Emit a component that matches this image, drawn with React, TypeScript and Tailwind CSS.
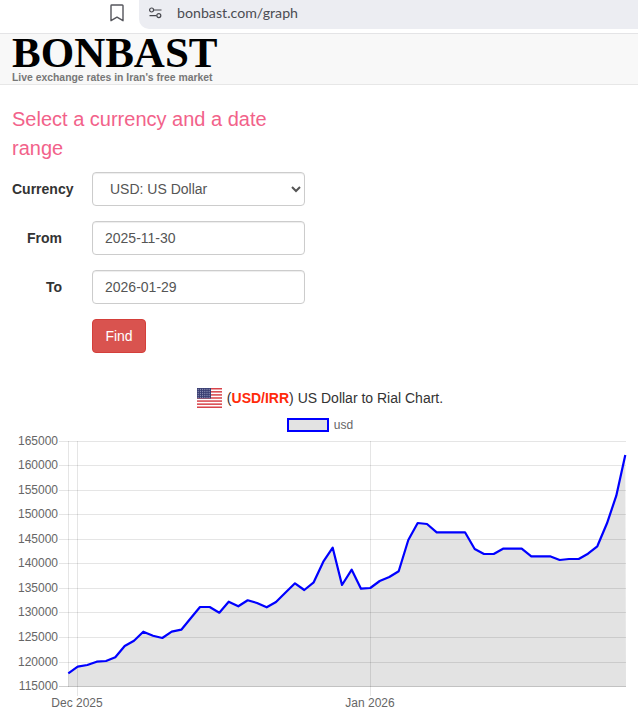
const leftPts = [
  [205, 730], [233, 710], [262, 705], [290, 695], [318, 693], [346, 682], [374, 648], [402, 632], [430, 605],
  [459, 617], [487, 624], [515, 605], [544, 599], [572, 565], [600, 531], [629, 531], [658, 548], [686, 515],
  [715, 529], [743, 511], [771, 519], [800, 532], [828, 516], [856, 488], [885, 460], [913, 480], [941, 457],
]
const rightPts = [
  [16, 395], [44, 353], [72, 465], [101, 419], [129, 476], [157, 474], [185, 453], [214, 441], [242, 424],
  [271, 330], [299, 279], [327, 282], [356, 307], [384, 307], [413, 307], [441, 307], [470, 357], [498, 372],
  [527, 372], [555, 356], [583, 356], [611, 356], [640, 379], [668, 379], [696, 379], [725, 390], [753, 387],
  [782, 387], [810, 371], [838, 349], [867, 280], [895, 197], [922, 75],
]

// measured from the reference, in page pixels
const points = [
  ...leftPts.map(([x, y]) => [x / 3, 430 + y / 3]),
  ...rightPts.map(([x, y]) => [318 + x / 3, 430 + y / 3]),
]
const line = points.map(([x, y]) => `${x.toFixed(1)},${y.toFixed(1)}`).join(' ')
const area = `68.3,686.5 ${line} 626,686.5`

const yTicks = [
  [165000, 441.5], [160000, 465.5], [155000, 490.5], [150000, 514.5], [145000, 539.5], [140000, 563.5],
  [135000, 588.5], [130000, 612.5], [125000, 637.5], [120000, 662.5], [115000, 686.5],
]

function BrowserBar() {
  return (
    <div className="flex h-[34px] border-b border-[#e4e4e6] bg-white">
      <div className="flex w-[139px] items-start justify-end pr-[15px] pt-[4px]">
        <svg width="14" height="18" viewBox="0 0 14 18" fill="none" stroke="#55565c" strokeWidth="1.4" strokeLinejoin="round">
          <path d="M1.7 1h10.6a.7.7 0 0 1 .7.7v15l-6-3.6-6 3.6v-15a.7.7 0 0 1 .7-.7z" />
        </svg>
      </div>
      <div className="flex h-[29px] flex-1 items-center rounded-bl-[10px] bg-[#ecedf2] pb-[3px] pl-[10px]">
        <svg width="13" height="12" viewBox="0 0 13 12" fill="none" stroke="#45464c" strokeWidth="1.2">
          <path d="M5 3h7.5M.5 8.6H7.5" />
          <circle cx="2.6" cy="3" r="2" />
          <circle cx="9.8" cy="8.6" r="2" />
        </svg>
        <span className="ml-[15px] font-['Lato',sans-serif] text-[14.2px] text-[#4b4c52]">bonbast.com/graph</span>
      </div>
    </div>
  )
}

function Field({ label, children }: { label: string; children: React.ReactNode }) {
  return (
    <div className="flex items-center">
      <label className="w-[50px] whitespace-nowrap text-right text-[14px] font-bold text-[#333]">{label}</label>
      <div className="ml-[30px] w-[213px]">{children}</div>
    </div>
  )
}

const inputClass =
  'h-[34px] w-full rounded-[4px] border border-[#ccc] bg-white px-[12px] text-[14px] text-[#555] shadow-[inset_0_1px_1px_rgba(0,0,0,0.075)] outline-none'

function Chart() {
  return (
    <svg width="638" height="288" viewBox="0 432 638 288" className="block font-['Liberation_Sans',sans-serif]">
      <polygon points={area} fill="#e3e3e3" />
      {yTicks.map(([value, y]) => (
        <g key={value}>
          <line x1="59" x2="626" y1={y} y2={y} stroke="#000" strokeOpacity="0.1" />
          <text x="58" y={y + 3.5} textAnchor="end" fontSize="12" fill="#666">
            {value}
          </text>
        </g>
      ))}
      <line x1="68.5" x2="68.5" y1="441" y2="687" stroke="#000" strokeOpacity="0.1" />
      <line x1="77.5" x2="77.5" y1="441" y2="696" stroke="#000" strokeOpacity="0.1" />
      <line x1="370.5" x2="370.5" y1="441" y2="696" stroke="#000" strokeOpacity="0.1" />
      <line x1="59" x2="626" y1="686.5" y2="686.5" stroke="#000" strokeOpacity="0.1" />
      <polyline points={line} fill="none" stroke="#0000ff" strokeWidth="2.2" strokeLinejoin="round" />
      <text x="77" y="707" textAnchor="middle" fontSize="12" fill="#666">
        Dec 2025
      </text>
      <text x="370" y="707" textAnchor="middle" fontSize="12" fill="#666">
        Jan 2026
      </text>
    </svg>
  )
}

function UsFlag() {
  const stripes = [0, 1, 2, 3, 4, 5, 6]
  const starRows = [1.2, 3.2, 5.2, 7.2, 9.2]
  const starCols = [1.2, 3.4, 5.6, 7.8, 10, 12.2]
  return (
    <svg width="25" height="20" viewBox="0 0 25 20" className="mr-[5px]">
      <rect width="25" height="20" fill="#fff" />
      {stripes.map((i) => (
        <rect key={i} y={i * 3.08} width="25" height="1.5" fill="#d8434a" />
      ))}
      <rect width="14" height="10.5" fill="#3a3f73" />
      {starRows.map((y) =>
        starCols.map((x) => <circle key={`${x}-${y}`} cx={x} cy={y} r="0.5" fill="#b9bcd6" />),
      )}
    </svg>
  )
}

export default function App() {
  return (
    <div className="h-[720px] w-[638px] overflow-hidden bg-white font-['Liberation_Sans',sans-serif]">
      <BrowserBar />
      <header className="h-[51px] border-b border-[#e7e7e7] bg-[#f8f8f8] pl-[12px]">
        <div className="font-['Liberation_Serif',serif] text-[43px] font-bold leading-[38px] text-black">BONBAST</div>
        <div className="whitespace-nowrap text-[10.4px] font-bold leading-[12px] text-[#777]">Live exchange rates in Iran's free market</div>
      </header>

      <h1 className="w-[280px] pl-[12px] pt-[20px] text-[20px] leading-[29px] text-[#f2628a]">
        Select a currency and a date range
      </h1>

      <form className="mt-[9px] flex flex-col gap-[15px] pl-[12px]">
        <Field label="Currency">
          <select className={inputClass + ' pl-[13px]'} defaultValue="USD">
            <option value="USD">USD: US Dollar</option>
          </select>
        </Field>
        <Field label="From">
          <input className={inputClass} defaultValue="2025-11-30" />
        </Field>
        <Field label="To">
          <input className={inputClass} defaultValue="2026-01-29" />
        </Field>
        <div className="pl-[80px]">
          <button type="button" className="h-[34px] w-[54px] rounded-[4px] border border-[#d43f3a] bg-[#d9534f] text-[14px] text-white">
            Find
          </button>
        </div>
      </form>

      <div className="mt-[35px] flex h-[20px] items-center justify-center pl-[2px] text-[14px] text-[#333]">
        <UsFlag />
        <span>
          (<b className="text-[#ff2a0a]">USD/IRR</b>) US Dollar to Rial Chart.
        </span>
      </div>
      <div className="mt-[10px] flex h-[14px] items-center justify-center pl-[2px] text-[12px] text-[#666]">
        <span className="h-[14px] w-[42px] border-2 border-[#0000ff] bg-[#e3e3e3]" />
        <span className="ml-[5px]">usd</span>
      </div>
      <Chart />
    </div>
  )
}
